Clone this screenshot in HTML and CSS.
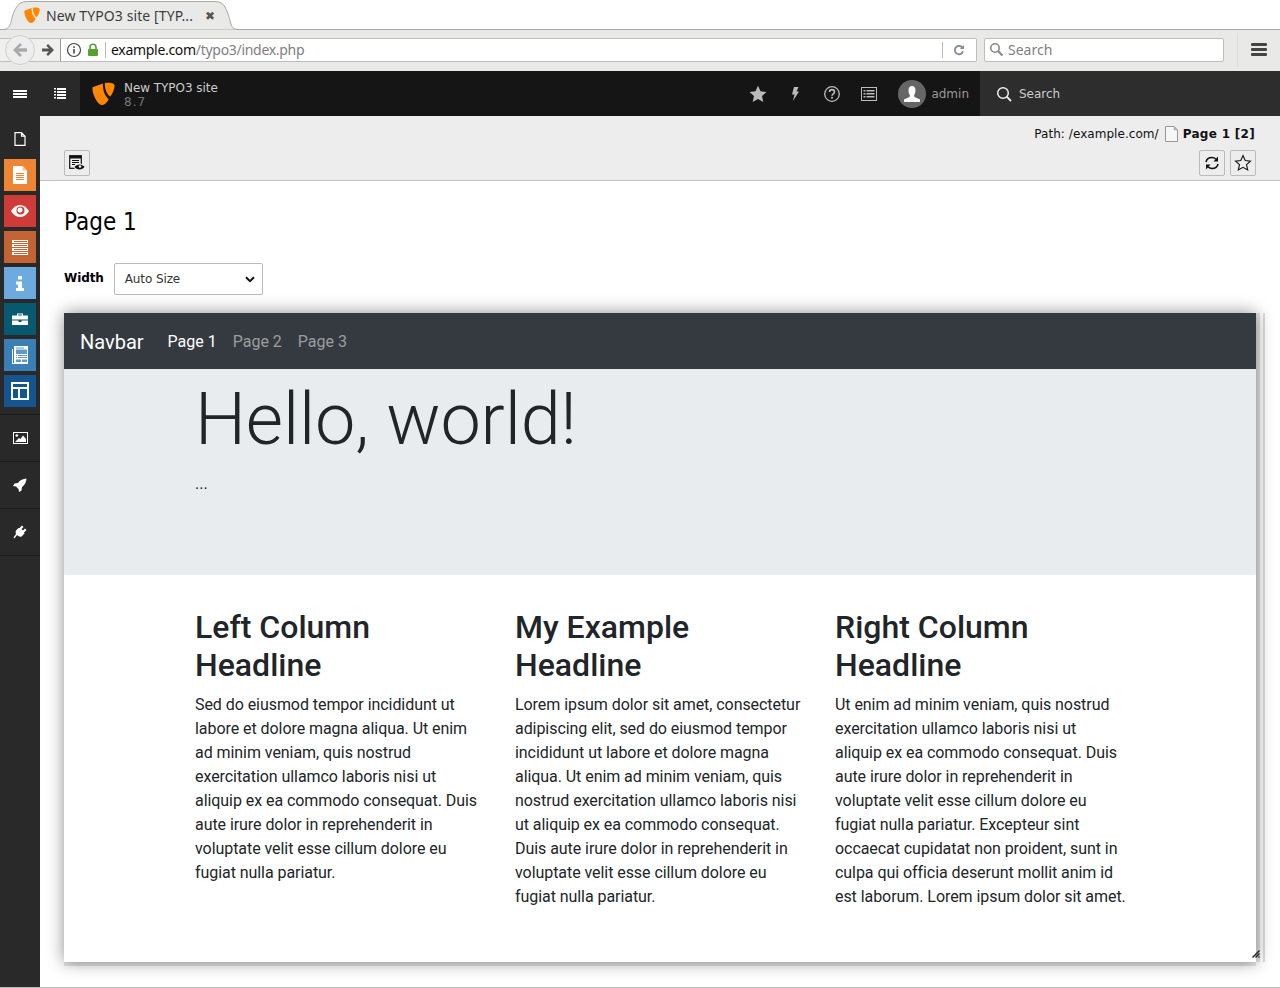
FILE: index.html
```html
<!DOCTYPE html>
<html>
<head>
    <meta charset="UTF-8">
    <title>New TYPO3 site [TYPO3 CMS 8.7]</title>
    <link rel="stylesheet" href="styles.css">
</head>
<body>
    <!-- Browser chrome -->
    <div class="tabstrip">
        <div class="tab">
            <svg class="tab-shape" width="240" height="30" viewBox="0 0 240 30"><path d="M0 29.500H3C8 29.500 10 26 11 22C12.500 16 13 12 17 6.500C19 3.500 22 1.500 27 1.500H215C220 1.500 223 3.500 225 7C228 12 229 18 231 24C232 27.500 234 29.500 238 29.500H240" fill="#e9e9e8" stroke="#a8a8a8"/></svg>
            <svg class="logo-small" width="16" height="16" viewBox="0 0 22 22"><path d="M.5 5L10.500 1.500C10 7 12 13 16 16.500C14 20 12 22 10 22C5 22 0 11 .5 5Z" fill="#ff8700"/><path d="M12.300 1C16 .5 21 .8 21.500 3C22 5.500 19.500 11.500 17.300 14C14 12 12 6 12.300 1Z" fill="#ff8700"/></svg>
            <span class="tab-title">New TYPO3 site [TYP...</span>
            <span class="tab-close">✖</span>
        </div>
    </div>
    <div class="toolbar">
        <div class="nav-buttons">
            <span class="back-btn">
                <svg width="18" height="16" viewBox="0 0 18 16"><path d="M9 1L2 8L9 15L11 13L7.500 9.700H16V6.300H7.500L11 3Z" fill="#aaa"/></svg>
            </span>
            <svg class="forward-arrow" width="14" height="14" viewBox="0 0 14 14"><path d="M7 1L13 7L7 13L5.300 11.300L8 8.500H1V5.500H8L5.300 2.700Z" fill="#555"/></svg>
        </div>
        <div class="urlbar">
            <svg width="16" height="16" viewBox="0 0 16 16"><circle cx="8" cy="8" r="6.500" fill="none" stroke="#444" stroke-width="1.200"/><rect x="7.200" y="7" width="1.600" height="4.500" fill="#444"/><rect x="7.200" y="4.300" width="1.600" height="1.600" fill="#444"/></svg>
            <svg class="lock" width="12" height="14" viewBox="0 0 12 14"><path d="M3 6V4.500C3 2.500 4.300 1.300 6 1.300S9 2.500 9 4.500V6" fill="none" stroke="#57a12e" stroke-width="1.600"/><rect x="1" y="6" width="10" height="7" rx="1" fill="#57a12e"/></svg>
            <span class="url-sep"></span>
            <span class="url-text"><b>example.com</b>/typo3/index.php</span>
            <span class="url-sep right"></span>
            <svg class="reload" width="12" height="12" viewBox="0 0 13 13"><path d="M10.500 4.500A4.500 4.500 0 1 0 10.800 8" fill="none" stroke="#7f8c99" stroke-width="2"/><path d="M7.500 5.500H12V1Z" fill="#7f8c99"/></svg>
        </div>
        <div class="searchbar">
            <svg width="15" height="15" viewBox="0 0 15 15"><circle cx="6" cy="6" r="4.200" fill="none" stroke="#888" stroke-width="1.600"/><path d="M9 9L13.500 13.500" stroke="#888" stroke-width="2.200"/></svg>
            <span>Search</span>
        </div>
        <div class="menu-btn"><i></i><i></i><i></i></div>
    </div>

    <!-- TYPO3 top bar -->
    <div class="topbar">
        <div class="topbar-left">
            <span class="bar-icon">
                <svg width="14" height="8" viewBox="0 0 14 8"><path d="M0 0H14V2H0ZM0 3H14V5H0ZM0 6H14V8H0Z" fill="#fff"/></svg>
            </span>
            <span class="bar-icon">
                <svg width="12" height="11" viewBox="0 0 12 11"><path d="M0 0H2V1.500H0ZM3 0H12V2H3ZM0 3H2V4.500H0ZM3 3H12V5H3ZM0 6H2V7.500H0ZM3 6H12V8H3ZM0 9H2V10.500H0ZM3 9H12V11H3Z" fill="#fff"/></svg>
            </span>
        </div>
        <div class="topbar-main">
            <svg class="logo" width="23" height="23" viewBox="0 0 22 22"><path d="M.5 5L10.500 1.500C10 7 12 13 16 16.500C14 20 12 22 10 22C5 22 0 11 .5 5Z" fill="#ff8700"/><path d="M12.300 1C16 .5 21 .8 21.500 3C22 5.500 19.500 11.500 17.300 14C14 12 12 6 12.300 1Z" fill="#ff8700"/></svg>
            <div class="site-name">
                <div>New TYPO3 site</div>
                <div class="version">8.7</div>
            </div>
            <div class="topbar-tools">
                <svg width="18" height="18" viewBox="0 0 18 18"><path d="M9 .8L11.500 6.300L17.500 7L13 11L14.300 17L9 14L3.700 17L5 11L.5 7L6.500 6.300Z" fill="#bbb"/></svg>
                <svg width="18" height="18" viewBox="0 0 18 18"><path d="M8 2H12.500L10.500 6.500H13L7 16L8.500 9.500H6Z" fill="#bbb"/></svg>
                <svg width="18" height="18" viewBox="0 0 18 18"><circle cx="9" cy="9" r="7.300" fill="none" stroke="#bbb" stroke-width="1.300"/><path d="M6.500 7C6.500 5.500 7.700 4.600 9 4.600S11.500 5.500 11.500 7C11.500 8.800 9 8.800 9 10.800" fill="none" stroke="#bbb" stroke-width="1.600"/><rect x="8.100" y="11.800" width="1.800" height="1.800" fill="#bbb"/></svg>
                <svg class="tool-list" width="16" height="14" viewBox="0 0 16 14"><rect x=".5" y=".5" width="15" height="13" fill="none" stroke="#bbb"/><path d="M2.500 3H4.500V4.500H2.500ZM5.500 3H13.500V4.500H5.500ZM2.500 6H4.500V7.500H2.500ZM5.500 6H13.500V7.500H5.500ZM2.500 9H4.500V10.500H2.500ZM5.500 9H13.500V10.500H5.500Z" fill="#bbb"/></svg>
                <span class="user">
                    <span class="avatar">
                        <svg width="28" height="28" viewBox="0 0 28 28"><path d="M14 6C16.500 6 17.500 8 17.500 10.500C17.500 13 16.500 14.500 16 15.500L16.500 17L22 19.500V22H6V19.500L11.500 17L12 15.500C11.500 14.500 10.500 13 10.500 10.500C10.500 8 11.500 6 14 6Z" fill="#fff"/></svg>
                    </span>
                    <span>admin</span>
                </span>
            </div>
        </div>
        <div class="topbar-search">
            <svg width="16" height="16" viewBox="0 0 16 16"><circle cx="7" cy="7" r="5.300" fill="none" stroke="#eee" stroke-width="1.500"/><path d="M10.700 10.700L15 15" stroke="#eee" stroke-width="1.800"/></svg>
            <span>Search</span>
        </div>
    </div>

    <div class="backend">
        <!-- Module menu -->
        <div class="sidebar">
            <div class="mod page-mod">
                <svg width="12" height="14" viewBox="0 0 12 14"><path d="M1 .7H7.500L11 4.200V13.300H1Z M7.500 .7V4.200H11" fill="none" stroke="#fff" stroke-width="1.200"/></svg>
            </div>
            <div class="mod c-orange">
                <svg width="14" height="18" viewBox="0 0 14 18"><path d="M0 0H9.500L14 4.500V18H0Z" fill="#fff"/><path d="M9.500 0L14 4.500H9.500Z" fill="#f6c39a"/><path d="M3 7H11V8H3ZM3 9H11V10H3ZM3 11H11V12H3ZM3 13H11V14H3Z" fill="#ee8534"/></svg>
            </div>
            <div class="mod c-red">
                <svg width="18" height="12" viewBox="0 0 18 12"><path d="M0 6C2.500 2 5.500 0 9 0S15.500 2 18 6C15.500 10 12.500 12 9 12S2.500 10 0 6Z" fill="#fff"/><circle cx="9.500" cy="5.500" r="4" fill="#cf3c37"/><circle cx="9" cy="5" r="2.500" fill="#fff"/></svg>
            </div>
            <div class="mod c-brown">
                <svg width="16" height="15" viewBox="0 0 16 15"><path d="M0 0H16V3H0ZM0 4H16V7H0ZM0 8H16V11H0ZM0 12H16V15H0Z" fill="#fff"/><path d="M2 1H15V2H2ZM2 5H15V6H2ZM2 9H15V10H2ZM2 13H15V14H2Z" fill="#c46435"/></svg>
            </div>
            <div class="mod c-blue">
                <svg width="8" height="15" viewBox="0 0 8 15"><path d="M2 0H6V3.500H2ZM0 5.500H6V12H8V15H0V12H2V8.500H0Z" fill="#fff"/></svg>
            </div>
            <div class="mod c-teal">
                <svg width="16" height="12" viewBox="0 0 16 12"><path d="M0 2.500H5V.5H11V2.500H16V6.500H0ZM6 1.500V2.500H10V1.500ZM0 7.500H6.500V9H9.500V7.500H16V12H0Z" fill="#fff"/></svg>
            </div>
            <div class="mod c-steel">
                <svg width="16" height="18" viewBox="0 0 16 18"><path d="M2 0H16V18H0V3H1V17H2Z" fill="#fff"/><path d="M4 1.500H12V2.500H4ZM4 3.500H15V8H4ZM4 9H5V10H4ZM6 9H15V10H6ZM4 11H5V12H4ZM6 11H15V12H6ZM4 13.500H9V16H4ZM10 13.500H15V16H10Z" fill="#3a7fb6" opacity=".8"/></svg>
            </div>
            <div class="mod c-navy">
                <svg width="18" height="18" viewBox="0 0 18 18"><rect x="1" y="1" width="16" height="16" fill="none" stroke="#fff" stroke-width="2"/><path d="M1 6H17M8 6V17" stroke="#fff" stroke-width="2"/></svg>
            </div>
            <div class="mod group first-group">
                <svg width="15" height="12" viewBox="0 0 15 12"><rect x=".5" y=".5" width="14" height="11" fill="none" stroke="#fff"/><circle cx="3.800" cy="3.500" r="1.300" fill="#fff"/><path d="M2 10L6 6L7.500 7L10 3.500L13 7V10Z" fill="#fff"/></svg>
            </div>
            <div class="mod group">
                <svg width="14" height="14" viewBox="0 0 14 14"><path d="M13.500 .5C10 .8 7 2 5 5L1.500 5.500L0 8L3 8.500L5.500 11L6 14L8.500 12.500L9 9C12 7 13.200 4 13.500 .5Z" fill="#fff"/></svg>
            </div>
            <div class="mod group">
                <svg width="14" height="14" viewBox="0 0 14 14"><path d="M9 .5L10.500 2L8.500 4L10 5.500L12 3.500L13.500 5L11 7.500L11.500 8.500L8.500 11.500C7 12 5.500 11.500 4 10L1.500 13.500L.5 12.500L3 9C2.500 7.500 2.500 6.500 3 5.500L5.500 3L6.500 3Z" fill="#fff"/></svg>
            </div>
        </div>

        <div class="content">
            <div class="docheader">
                <div class="path-row">
                    <span class="path-text">Path: /example.com/</span>
                    <svg class="path-icon" width="13" height="16" viewBox="0 0 13 16"><path d="M.5 .5H9L12.500 4V15.500H.5Z" fill="#f6f6f6" stroke="#999"/><path d="M9 .5V4H12.500Z" fill="#bbb" stroke="#999" stroke-width=".5"/></svg>
                    <b>Page 1 [2]</b>
                </div>
                <div class="button-row">
                    <span class="doc-btn">
                        <svg width="16" height="16" viewBox="0 0 16 16"><rect x=".7" y=".7" width="11.600" height="12.600" fill="none" stroke="#111" stroke-width="1.200"/><path d="M1 1H12V3.500H1ZM3 5H10V6H3ZM3 7H10V8H3ZM3 9H6V10H3Z" fill="#111"/><path d="M4.500 12C5.500 10 8 8.500 10.500 8.500S15 10 16 12C15 14 13 15.500 10.500 15.500S5.500 14 4.500 12Z" fill="#ededed"/><path d="M5.500 12C6.500 10.500 8.500 9.500 10.500 9.500S14.500 10.500 15.500 12C14.500 13.500 12.500 14.500 10.500 14.500S6.500 13.500 5.500 12Z" fill="#111"/><circle cx="11" cy="11.500" r="1.300" fill="#ededed"/></svg>
                    </span>
                    <div class="doc-btn-right">
                        <span class="doc-btn">
                            <svg width="16" height="16" viewBox="0 0 16 16"><path d="M2 7C2.500 4.500 5 2.500 8 2.500C9.800 2.500 11 3.200 12 4.200" fill="none" stroke="#111" stroke-width="1.500"/><path d="M14 1.500V6.500H9.500Z" fill="#111"/><path d="M14 9C13.500 11.500 11 13.500 8 13.500C6.200 13.500 5 12.800 4 11.800" fill="none" stroke="#111" stroke-width="1.500"/><path d="M2 14.500V9.500H6.500Z" fill="#111"/></svg>
                        </span>
                        <span class="doc-btn">
                            <svg width="18" height="18" viewBox="0 0 18 18"><path d="M9 1.500L11.200 6.500L16.500 7.100L12.500 10.700L13.700 16L9 13.300L4.300 16L5.500 10.700L1.500 7.100L6.800 6.500Z" fill="none" stroke="#111" stroke-width="1.100"/></svg>
                        </span>
                    </div>
                </div>
            </div>

            <div class="module-body">
                <h1 class="page-title">Page 1</h1>
                <div class="width-row">
                    <label>Width</label>
                    <div class="fake-select">
                        <span>Auto Size</span>
                        <svg width="10" height="7" viewBox="0 0 10 7"><path d="M1 1.200L5 5.200L9 1.200" fill="none" stroke="#111" stroke-width="2"/></svg>
                    </div>
                </div>

                <div class="preview-wrap">
                    <div class="preview">
                        <nav class="site-nav">
                            <span class="brand">Navbar</span>
                            <a class="active">Page 1</a>
                            <a>Page 2</a>
                            <a>Page 3</a>
                        </nav>
                        <div class="jumbotron">
                            <div class="container">
                                <h1>Hello, world!</h1>
                                <p>...</p>
                            </div>
                        </div>
                        <div class="container columns">
                            <div class="col">
                                <h2>Left Column Headline</h2>
                                <p>Sed do eiusmod tempor incididunt ut labore et dolore magna aliqua. Ut enim ad minim veniam, quis nostrud exercitation ullamco laboris nisi ut aliquip ex ea commodo consequat. Duis aute irure dolor in reprehenderit in voluptate velit esse cillum dolore eu fugiat nulla pariatur.</p>
                            </div>
                            <div class="col">
                                <h2>My Example Headline</h2>
                                <p>Lorem ipsum dolor sit amet, consectetur adipiscing elit, sed do eiusmod tempor incididunt ut labore et dolore magna aliqua. Ut enim ad minim veniam, quis nostrud exercitation ullamco laboris nisi ut aliquip ex ea commodo consequat. Duis aute irure dolor in reprehenderit in voluptate velit esse cillum dolore eu fugiat nulla pariatur.</p>
                            </div>
                            <div class="col">
                                <h2>Right Column Headline</h2>
                                <p>Ut enim ad minim veniam, quis nostrud exercitation ullamco laboris nisi ut aliquip ex ea commodo consequat. Duis aute irure dolor in reprehenderit in voluptate velit esse cillum dolore eu fugiat nulla pariatur. Excepteur sint occaecat cupidatat non proident, sunt in culpa qui officia deserunt mollit anim id est laborum. Lorem ipsum dolor sit amet.</p>
                            </div>
                        </div>
                        <svg class="resize-grip" width="8" height="8" viewBox="0 0 8 8"><path d="M7 0L8 1L1 8L0 7ZM7 3L8 4L4 8L3 7ZM7 6L8 7L7 8L6 7Z" fill="#222"/></svg>
                    </div>
                </div>
            </div>
        </div>
    </div>
</body>
</html>
```

FILE: styles.css
```css
html, body {
    margin: 0;
    padding: 0;
    height: 988px;
    overflow: hidden;
}

body {
    font-family: "DejaVu Sans", sans-serif;
    font-size: 12px;
    background-color: #fff;
    border-bottom: 1px solid #bbb;
    box-sizing: border-box;
}

/* Browser chrome */
.tabstrip {
    height: 30px;
    box-sizing: border-box;
    border-bottom: 1px solid #a8a8a8;
    background-color: #fff;
}

.tab {
    position: relative;
    width: 240px;
    height: 30px;
    display: flex;
    align-items: center;
    padding-left: 24px;
    box-sizing: border-box;
    color: #3c3c3c;
    font-family: "Noto Sans", sans-serif;
    font-size: 14px;
}

.tab-shape {
    position: absolute;
    left: 0;
    top: 0;
}

.logo-small, .tab-title, .tab-close {
    position: relative;
}

.tab-title {
    margin-left: 6px;
    width: 152px;
    white-space: nowrap;
    letter-spacing: .1px;
}

.tab-close {
    font-size: 12px;
    color: #555;
    margin-left: 7px;
}

.toolbar {
    height: 41px;
    box-sizing: border-box;
    padding-bottom: 2px;
    background-color: #e9e9e8;
    display: flex;
    align-items: center;
    font-family: "Noto Sans", sans-serif;
    font-size: 14px;
}

.nav-buttons {
    display: flex;
    align-items: center;
    width: 60px;
    height: 24px;
    background-color: #f0f0ef;
    box-sizing: border-box;
    border-top: 1px solid #c0c0c0;
    border-bottom: 1px solid #c0c0c0;
    padding-left: 5px;
}

.back-btn {
    width: 30px;
    height: 30px;
    box-sizing: border-box;
    border: 1px solid #d0d0d0;
    border-radius: 50%;
    background-color: #eee;
    display: flex;
    align-items: center;
    justify-content: center;
    flex-shrink: 0;
}

.forward-arrow {
    margin-left: 6px;
}

.urlbar {
    width: 917px;
    height: 24px;
    box-sizing: border-box;
    background-color: #fff;
    border: 1px solid #bdbdbd;
    border-left-color: #9a9a9a;
    border-radius: 0 2px 2px 0;
    display: flex;
    align-items: center;
    padding-left: 5px;
    color: #808080;
}

.lock {
    margin-left: 5px;
}

.url-sep {
    width: 1px;
    height: 16px;
    background-color: #bbb;
    margin: 0 5px 0 6px;
}

.url-sep.right {
    margin: 0 0 0 auto;
}

.url-text {
    letter-spacing: -.3px;
}

.url-text b {
    font-weight: 400;
    color: #111;
}

.reload {
    margin: 0 11px 0 10px;
}

.searchbar {
    width: 240px;
    height: 24px;
    margin-left: 7px;
    box-sizing: border-box;
    background-color: #fff;
    border: 1px solid #bdbdbd;
    border-radius: 2px;
    display: flex;
    align-items: center;
    gap: 4px;
    padding-left: 4px;
    color: #808080;
}

.menu-btn {
    width: 16px;
    margin-left: 13px;
    padding-left: 13px;
    height: 34px;
    border-left: 1px solid #dcdcdc;
    display: flex;
    flex-direction: column;
    justify-content: center;
    gap: 2px;
    flex-shrink: 0;
}

.menu-btn i {
    display: block;
    height: 3px;
    border-radius: 1px;
    background-color: #444;
}

/* TYPO3 top bar */
.topbar {
    height: 45px;
    display: flex;
    color: #ccc;
}

.topbar-left {
    width: 80px;
    display: flex;
    background-color: #292929;
}

.bar-icon {
    width: 40px;
    display: flex;
    align-items: center;
    justify-content: center;
}

.topbar-main {
    flex: 1;
    display: flex;
    align-items: center;
    background-color: #151515;
    padding-left: 12px;
}

.site-name {
    margin-left: 9px;
    padding-top: 2px;
    line-height: 14px;
    color: #ccc;
    letter-spacing: -.05px;
}

.version {
    color: #777;
    letter-spacing: 1px;
}

.topbar-tools {
    margin-left: auto;
    display: flex;
    align-items: center;
    gap: 19px;
    padding-right: 11px;
}

.tool-list {
    margin-left: 1px;
}

.user {
    display: flex;
    align-items: center;
    gap: 5px;
    color: #999;
    margin-left: 2px;
}

.avatar {
    width: 28px;
    height: 28px;
    border-radius: 50%;
    background-color: #666;
    display: flex;
}

.topbar-search {
    width: 300px;
    box-sizing: border-box;
    padding-left: 16px;
    display: flex;
    align-items: center;
    gap: 7px;
    background-color: #2d2d2d;
}

/* Backend layout */
.backend {
    display: flex;
    height: 871px;
}

.sidebar {
    width: 40px;
    flex-shrink: 0;
    background-color: #292929;
    display: flex;
    flex-direction: column;
    align-items: center;
}

.mod {
    width: 32px;
    height: 32px;
    margin-bottom: 4px;
    display: flex;
    align-items: center;
    justify-content: center;
    flex-shrink: 0;
}

.page-mod {
    height: 43px;
    margin-bottom: 0;
    box-sizing: border-box;
    padding-top: 3px;
}

.c-orange { background-color: #ee8534; }
.c-red { background-color: #cf3c37; }
.c-brown { background-color: #c46435; }
.c-blue { background-color: #6daae0; }
.c-teal { background-color: #07596f; }
.c-steel { background-color: #3a7fb6; }
.c-navy { background-color: #14548f; }

.mod.group {
    width: 40px;
    height: 47px;
    margin-bottom: 0;
    box-sizing: border-box;
    border-bottom: 1px solid #1c1c1c;
}

.mod.first-group {
    border-top: 1px solid #1c1c1c;
    height: 48px;
    margin-top: 3px;
}

.content {
    flex: 1;
    min-width: 0;
}

.docheader {
    height: 65px;
    box-sizing: border-box;
    background-color: #ededed;
    border-bottom: 1px solid #c3c3c3;
    padding: 9px 24px 0 24px;
}

.path-row {
    display: flex;
    justify-content: flex-end;
    align-items: center;
    gap: 6px;
    height: 18px;
    color: #111;
    margin-right: 1px;
}

.path-text {
    letter-spacing: .05px;
}

.path-icon {
    margin-right: -1px;
}

.path-row b {
    letter-spacing: .3px;
}

.button-row {
    display: flex;
    justify-content: space-between;
    margin-top: 7px;
}

.doc-btn-right {
    display: flex;
    gap: 5px;
}

.doc-btn {
    width: 26px;
    height: 26px;
    box-sizing: border-box;
    border: 1px solid #bbb;
    border-radius: 2px;
    display: flex;
    align-items: center;
    justify-content: center;
}

.module-body {
    padding: 25px 24px 0 24px;
}

.page-title {
    font-family: "DejaVu Sans Condensed", sans-serif;
    font-size: 24px;
    font-weight: 400;
    line-height: 32px;
    margin: 0 0 25px 0;
    color: #000;
}

.width-row {
    display: flex;
    align-items: center;
    gap: 10px;
}

.width-row label {
    font-weight: 700;
    color: #000;
    margin-bottom: 2px;
    letter-spacing: -.1px;
}

.fake-select {
    width: 149px;
    height: 32px;
    box-sizing: border-box;
    border: 1px solid #bbb;
    border-radius: 2px;
    background-color: #fff;
    padding: 0 7px 0 10px;
    display: flex;
    align-items: center;
    justify-content: space-between;
    color: #333;
    letter-spacing: -.1px;
}

/* Page preview */
.preview-wrap {
    margin-top: 18px;
    width: 1201px;
    height: 649px;
    box-sizing: border-box;
    border-right: 2px solid #ddd;
}

.preview {
    position: relative;
    width: 1192px;
    height: 649px;
    background-color: #fff;
    font-family: Roboto, sans-serif;
    font-size: 16px;
    line-height: 24px;
    color: #212529;
    box-shadow: 4px 0 0 rgba(0, 0, 0, .1), 0 4px 0 rgba(0, 0, 0, .1), 0 0 16px rgba(0, 0, 0, .45);
}

.site-nav {
    height: 56px;
    box-sizing: border-box;
    padding: 1px 0 0 16px;
    background-color: #343a40;
    display: flex;
    align-items: center;
    gap: 16px;
    color: rgba(255, 255, 255, .5);
}

.brand {
    color: #fff;
    font-size: 20px;
    margin-right: 8px;
}

.site-nav .active {
    color: #fff;
}

.jumbotron {
    height: 206px;
    background-color: #e9ecef;
    border-radius: 0 0 2px 2px;
}

.container {
    width: 960px;
    margin: 0 auto;
    box-sizing: border-box;
    padding: 0 15px;
}

.jumbotron h1 {
    font-size: 72px;
    font-weight: 300;
    line-height: 86px;
    margin: 0 0 9px 0;
    padding-top: 8px;
    letter-spacing: -.15px;
}

.jumbotron p {
    margin: 0;
}

.columns {
    display: flex;
    padding: 33px 0 0 0;
}

.col {
    width: 320px;
    box-sizing: border-box;
    padding: 0 14px 0 15px;
}

.col h2 {
    font-size: 32px;
    font-weight: 500;
    line-height: 38.4px;
    margin: 0 0 8px 0;
}

.col p {
    margin: 0;
    letter-spacing: -.06px;
}

.resize-grip {
    position: absolute;
    right: -4px;
    bottom: 4px;
}
```
